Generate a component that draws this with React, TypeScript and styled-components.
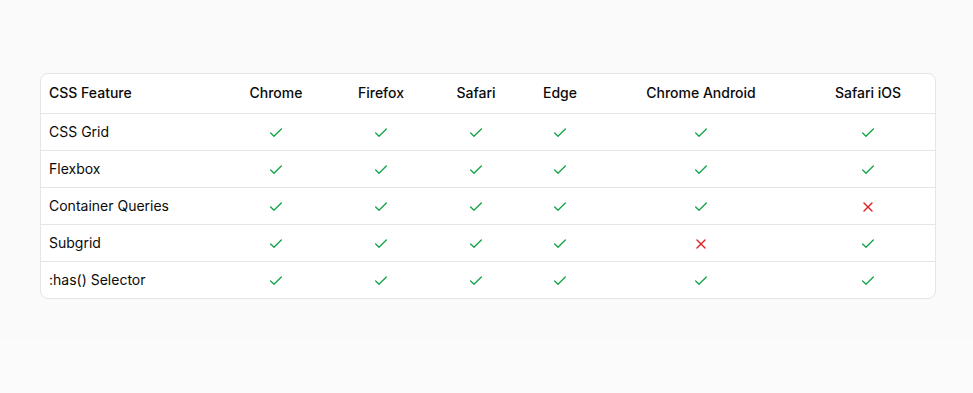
import React from 'react';
import styled, { createGlobalStyle } from 'styled-components';
import { Check, X } from 'lucide-react';

const GlobalStyle = createGlobalStyle`
  html, body {
    margin: 0;
    padding: 0;
    background: #fbfbfb;
  }
  body {
    font-family: Inter, "Noto Sans", sans-serif;
    color: #0a0a0a;
  }
`;

const Page = styled.div`
  background: #fafafa;
  padding: 73px 37px 40px 40px;
`;

const Card = styled.div`
  background: #ffffff;
  border: 1px solid #e5e5e5;
  border-radius: 8px;
  overflow: hidden;
`;

const Table = styled.table`
  width: 100%;
  border-collapse: collapse;
  table-layout: fixed;
  font-size: 14px;
  line-height: 20px;
`;

const HeadRow = styled.tr`
  height: 39px;
  border-bottom: 1px solid #e5e5e5;
`;

const Row = styled.tr<{ $last?: boolean }>`
  border-bottom: ${(p) => (p.$last ? 'none' : '1px solid #e5e5e5')};
`;

const Th = styled.th<{ $left?: boolean }>`
  padding: 0 8px;
  font-weight: 500;
  text-align: ${(p) => (p.$left ? 'left' : 'center')};
  color: #0a0a0a;
  white-space: nowrap;
`;

const FeatureCell = styled.td`
  padding: 8px;
  font-weight: 400;
  white-space: nowrap;
`;

const StatusCell = styled.td`
  padding: 8px;
  text-align: center;
  svg {
    display: inline-block;
    vertical-align: middle;
  }
`;

const browsers = [
  { name: 'Chrome', width: 106 },
  { name: 'Firefox', width: 104 },
  { name: 'Safari', width: 86 },
  { name: 'Edge', width: 82 },
  { name: 'Chrome Android', width: 200 },
  { name: 'Safari iOS', width: 134 },
];

const features: { name: string; support: boolean[] }[] = [
  { name: 'CSS Grid', support: [true, true, true, true, true, true] },
  { name: 'Flexbox', support: [true, true, true, true, true, true] },
  { name: 'Container Queries', support: [true, true, true, true, true, false] },
  { name: 'Subgrid', support: [true, true, true, true, false, true] },
  { name: ':has() Selector', support: [true, true, true, true, true, true] },
];

const App = () => {
  return (
    <>
      <GlobalStyle />
      <Page>
        <Card>
          <Table>
            <colgroup>
              <col style={{ width: 182 }} />
              {browsers.map((b) => (
                <col key={b.name} style={{ width: b.width }} />
              ))}
            </colgroup>
            <thead>
              <HeadRow>
                <Th $left>CSS Feature</Th>
                {browsers.map((b) => (
                  <Th key={b.name}>{b.name}</Th>
                ))}
              </HeadRow>
            </thead>
            <tbody>
              {features.map((f, i) => (
                <Row key={f.name} $last={i === features.length - 1}>
                  <FeatureCell>{f.name}</FeatureCell>
                  {f.support.map((ok, j) => (
                    <StatusCell key={j}>
                      {ok ? (
                        <Check size={16} color="#16a34a" />
                      ) : (
                        <X size={16} color="#dc2626" />
                      )}
                    </StatusCell>
                  ))}
                </Row>
              ))}
            </tbody>
          </Table>
        </Card>
      </Page>
    </>
  );
};

export default App;
